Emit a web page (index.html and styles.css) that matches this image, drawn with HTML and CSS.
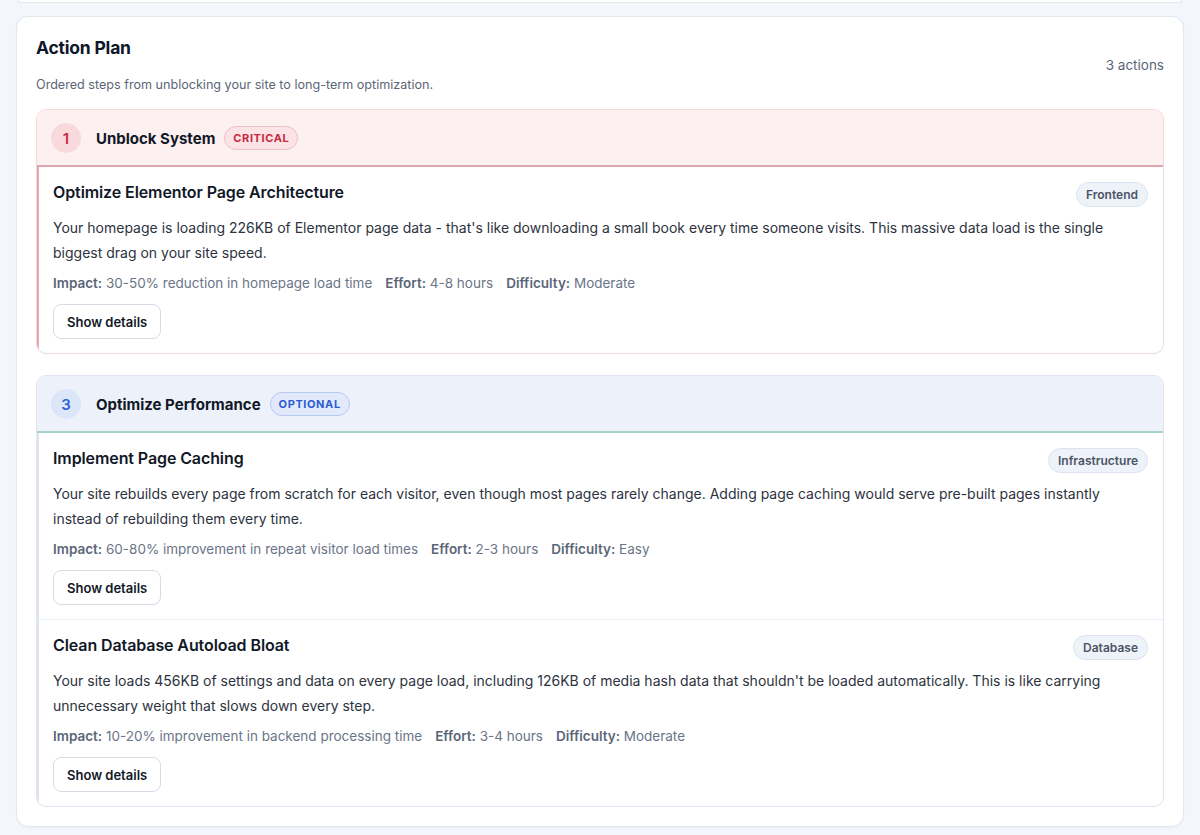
FILE: index.html
```html
<!DOCTYPE html>
<html lang="en">
<head>
<meta charset="utf-8">
<title>Action Plan</title>
<link rel="stylesheet" href="styles.css">
</head>
<body>
<div class="prev-card"></div>
<main class="card">
  <header class="card-head">
    <div>
      <h2 class="card-title">Action Plan</h2>
      <p class="card-sub">Ordered steps from unblocking your site to long-term optimization.</p>
    </div>
    <span class="count">3 actions</span>
  </header>

  <section class="phase phase-critical">
    <div class="phase-head">
      <span class="num">1</span>
      <h3 class="phase-title">Unblock System</h3>
      <span class="badge">CRITICAL</span>
    </div>
    <div class="phase-body">
      <article class="item">
        <div class="item-head">
          <h4 class="item-title">Optimize Elementor Page Architecture</h4>
          <span class="tag">Frontend</span>
        </div>
        <p class="desc">Your homepage is loading 226KB of Elementor page data - that's like downloading a small book every time someone visits. This massive data load is the single biggest drag on your site speed.</p>
        <div class="meta">
          <span><b>Impact:</b> 30-50% reduction in homepage load time</span>
          <span><b>Effort:</b> 4-8 hours</span>
          <span><b>Difficulty:</b> Moderate</span>
        </div>
        <button class="btn">Show details</button>
      </article>
    </div>
  </section>

  <section class="phase phase-optional">
    <div class="phase-head">
      <span class="num">3</span>
      <h3 class="phase-title">Optimize Performance</h3>
      <span class="badge">OPTIONAL</span>
    </div>
    <div class="phase-body">
      <article class="item">
        <div class="item-head">
          <h4 class="item-title">Implement Page Caching</h4>
          <span class="tag">Infrastructure</span>
        </div>
        <p class="desc">Your site rebuilds every page from scratch for each visitor, even though most pages rarely change. Adding page caching would serve pre-built pages instantly instead of rebuilding them every time.</p>
        <div class="meta">
          <span><b>Impact:</b> 60-80% improvement in repeat visitor load times</span>
          <span><b>Effort:</b> 2-3 hours</span>
          <span><b>Difficulty:</b> Easy</span>
        </div>
        <button class="btn">Show details</button>
      </article>
      <article class="item">
        <div class="item-head">
          <h4 class="item-title">Clean Database Autoload Bloat</h4>
          <span class="tag">Database</span>
        </div>
        <p class="desc">Your site loads 456KB of settings and data on every page load, including 126KB of media hash data that shouldn't be loaded automatically. This is like carrying unnecessary weight that slows down every step.</p>
        <div class="meta">
          <span><b>Impact:</b> 10-20% improvement in backend processing time</span>
          <span><b>Effort:</b> 3-4 hours</span>
          <span><b>Difficulty:</b> Moderate</span>
        </div>
        <button class="btn">Show details</button>
      </article>
    </div>
  </section>
</main>
</body>
</html>
```

FILE: styles.css
```css
* { box-sizing: border-box; }
html, body { margin: 0; }
body {
  background: #f3f6fb;
  font-family: Inter, "Noto Sans", "Liberation Sans", sans-serif;
  color: #111827;
  padding: 0 16px 10px;
}
h2, h3, h4, p { margin: 0; }

.prev-card {
  height: 3px;
  margin: 0 2px 13px;
  background: #fff;
  border: 1px solid #e3e8ef;
  border-top: none;
  border-radius: 0 0 10px 10px;
}

.card {
  background: #fff;
  border: 1px solid #e2e7ee;
  border-radius: 12px;
  padding: 19px 19px 19px;
  box-shadow: 0 1px 2px rgba(15, 23, 42, 0.04);
}

.card-head {
  display: flex;
  justify-content: space-between;
  align-items: center;
  margin-bottom: 15px;
}
.card-title {
  font-size: 17.5px;
  font-weight: 700;
  line-height: 24px;
  letter-spacing: -0.2px;
  color: #0f172a;
}
.card-sub {
  margin-top: 16px;
  font-size: 12.6px;
  line-height: 18px;
  color: #5b6678;
}
.count {
  font-size: 13.5px;
  color: #5b6678;
}

.phase {
  border: 1px solid #e8ecf2;
  border-radius: 10px;
  overflow: hidden;
}
.phase + .phase { margin-top: 21px; }

.phase-head {
  display: flex;
  align-items: center;
  padding: 13px 14px 12px;
  border-bottom: 2px solid;
}
.num {
  width: 30px;
  height: 30px;
  border-radius: 50%;
  display: flex;
  align-items: center;
  justify-content: center;
  font-size: 15px;
  font-weight: 600;
  margin-right: 15px;
}
.phase-title {
  font-size: 15px;
  font-weight: 700;
  color: #111827;
  margin-right: 9px;
}
.badge {
  height: 24px;
  padding: 0 8px;
  display: inline-flex;
  align-items: center;
  border-radius: 12px;
  border: 1px solid;
  font-size: 11px;
  font-weight: 700;
  letter-spacing: 0.6px;
}

.phase-critical { border-color: #f1d9dc; }
.phase-critical .phase-head {
  background: #fcf0f1;
  border-bottom-color: #dba7af;
}
.phase-critical .num { background: #f8dadd; color: #c62d43; }
.phase-critical .badge { background: #fbe3e6; border-color: #efbfc6; color: #c8283f; }
.phase-critical .phase-body { border-left: 2px solid #e6a6b0; }

.phase-optional { border-color: #dfe6f1; }
.phase-optional .phase-head {
  background: #edf1fa;
  border-bottom-color: #a5d4c2;
}
.phase-optional .num { background: #dce6f9; color: #2f63d6; }
.phase-optional .badge { background: #e2e9fb; border-color: #b8c9f1; color: #2d5cd0; }
.phase-optional .phase-body { border-left: 2px solid #dde4ee; }

.item {
  padding: 15px 15px 14px 14px;
}
.item + .item { border-top: 1px solid #e9edf3; }

.item-head {
  display: flex;
  justify-content: space-between;
  align-items: flex-start;
  min-height: 25px;
}
.item-title {
  font-size: 16px;
  line-height: 21px;
  font-weight: 600;
  color: #111827;
  letter-spacing: -0.1px;
}
.tag {
  height: 25px;
  padding: 0 9px;
  display: inline-flex;
  align-items: center;
  border-radius: 13px;
  background: #eef2f9;
  border: 1px solid #dde4ef;
  font-size: 12px;
  font-weight: 600;
  color: #4b5565;
}

.desc {
  margin-top: 9px;
  font-size: 14px;
  line-height: 24.5px;
  color: #2d3340;
}
.meta {
  display: flex;
  gap: 13px;
  margin-top: 8px;
  font-size: 13.5px;
  line-height: 20px;
  color: #6b7587;
}
.meta b { font-weight: 600; color: #5b6678; }

.btn {
  display: block;
  margin-top: 11px;
  height: 35px;
  padding: 0 13px;
  background: #fff;
  border: 1px solid #d5dce6;
  border-radius: 8px;
  font-family: inherit;
  font-size: 13px;
  font-weight: 600;
  color: #111827;
}
```
